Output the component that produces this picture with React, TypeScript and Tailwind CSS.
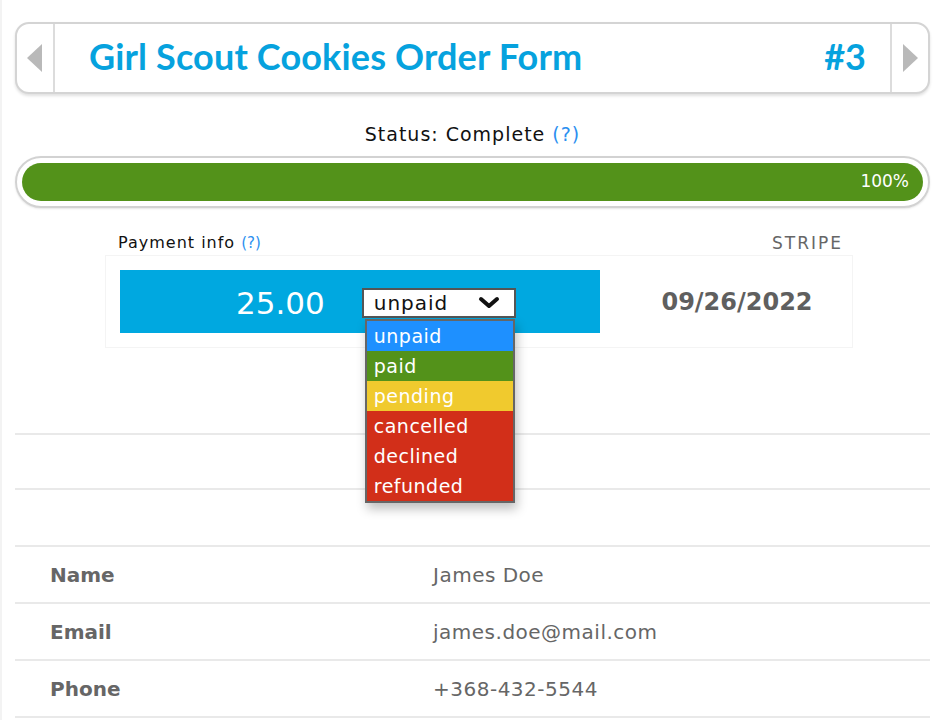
const statusOptions = [
  { label: "unpaid", bg: "bg-[#1e90ff]" },
  { label: "paid", bg: "bg-[#53921a]" },
  { label: "pending", bg: "bg-[#f0ca2e]" },
  { label: "cancelled", bg: "bg-[#d22f19]" },
  { label: "declined", bg: "bg-[#d22f19]" },
  { label: "refunded", bg: "bg-[#d22f19]" },
];

const contactRows = [
  { label: "Name", value: "James Doe" },
  { label: "Email", value: "james.doe@mail.com" },
  { label: "Phone", value: "+368-432-5544" },
];

const bodyFont = "font-['DejaVu_Sans',sans-serif]";

function Chevron() {
  return (
    <svg width="22" height="14" viewBox="0 0 22 14" fill="none">
      <path d="M3 3 L11 10 L19 3" stroke="#111" strokeWidth="4" strokeLinecap="round" strokeLinejoin="round" />
    </svg>
  );
}

export default function App() {
  return (
    <div className={`min-h-screen bg-white border-l-2 border-[#f3f3f3] pl-[13px] pr-[4px] pt-[22px] ${bodyFont}`}>
      {/* header / pager */}
      <div className="flex h-[72px] rounded-[14px] border-2 border-[#d4d4d4] shadow-[0_2px_3px_rgba(0,0,0,0.12)] bg-white">
        <div className="flex w-[38px] items-center justify-center border-r-2 border-[#dcdcdc]">
          <svg width="16" height="28" viewBox="0 0 16 28">
            <polygon points="15,0 0,14 15,28" fill="#b9b9b9" />
          </svg>
        </div>
        <div className="flex flex-1 items-center justify-between pb-[5px] pl-[34px] pr-[24px]">
          <h1 className="font-['Lato',sans-serif] text-[36px] font-bold tracking-[0.15px] text-[#06a2de]">
            Girl Scout Cookies Order Form
          </h1>
          <span className="font-['Lato',sans-serif] text-[36px] font-bold text-[#06a2de]">#3</span>
        </div>
        <div className="flex w-[38px] items-center justify-center border-l-2 border-[#dcdcdc]">
          <svg width="16" height="28" viewBox="0 0 16 28">
            <polygon points="1,0 16,14 1,28" fill="#b9b9b9" />
          </svg>
        </div>
      </div>

      {/* status */}
      <div className="mt-[28px] text-center text-[19px] leading-[24px] tracking-[1px] text-[#111]">
        Status: Complete <span className="text-[#2b8ff0]">(?)</span>
      </div>
      <div className="mt-[10px] h-[52px] rounded-full border-2 border-[#d2d2d2] p-[5px] shadow-[0_1px_2px_rgba(0,0,0,0.1)]">
        <div className="flex h-full items-center justify-end rounded-full bg-[#53921a] pr-[14px] text-[17px] text-white">
          100%
        </div>
      </div>

      {/* payment */}
      <div className="ml-[90px] w-[748px]">
        <div className="mt-[25px] flex items-center justify-between pl-[13px] pr-[10px] leading-[20px]">
          <span className="text-[16px] tracking-[1px] text-[#111]">
            Payment info <span className="text-[15px] tracking-normal text-[#2b8ff0]">(?)</span>
          </span>
          <span className="text-[17px] tracking-[2px] text-[#666]">STRIPE</span>
        </div>
        <div className="mt-[2px] flex border border-[#f4f4f4] p-[14px]">
          <div className="flex h-[63px] w-[480px] items-center gap-[37px] bg-[#00a8e0] pl-[116px] pt-[3px]">
            <span className="text-[31px] text-white">25.00</span>
            <div className="relative">
              <div className="flex h-[30px] w-[154px] items-center justify-between border-2 border-[#555] bg-white pl-[10px] pr-[14px] text-[20px] tracking-[1px] text-[#111]">
                unpaid
                <Chevron />
              </div>
              <div className="absolute left-[3px] top-[31px] z-10 w-[150px] border-2 border-[#666] shadow-[2px_6px_10px_rgba(0,0,0,0.25)]">
                {statusOptions.map((o) => (
                  <div key={o.label} className={`flex h-[30px] items-center pl-[7px] text-[19px] tracking-[0.5px] text-white ${o.bg}`}>
                    {o.label}
                  </div>
                ))}
              </div>
            </div>
          </div>
          <div className="flex flex-1 items-center justify-center pl-[36px]">
            <span className="text-[24px] font-bold text-[#5f5f5f]">09/26/2022</span>
          </div>
        </div>
      </div>

      {/* rows */}
      <div className="mt-[85px]">
        <div className="h-[55px] border-t-2 border-[#e9e9e9]" />
        <div className="h-[57px] border-t-2 border-[#e9e9e9]" />
        {contactRows.map((r) => (
          <div key={r.label} className="flex h-[57px] items-center border-t-2 border-[#e9e9e9] text-[20px] text-[#666]">
            <span className="w-[418px] pl-[35px] font-bold">{r.label}</span>
            <span className="tracking-[0.5px]">{r.value}</span>
          </div>
        ))}
        <div className="border-t-2 border-[#e9e9e9]" />
      </div>
    </div>
  );
}
